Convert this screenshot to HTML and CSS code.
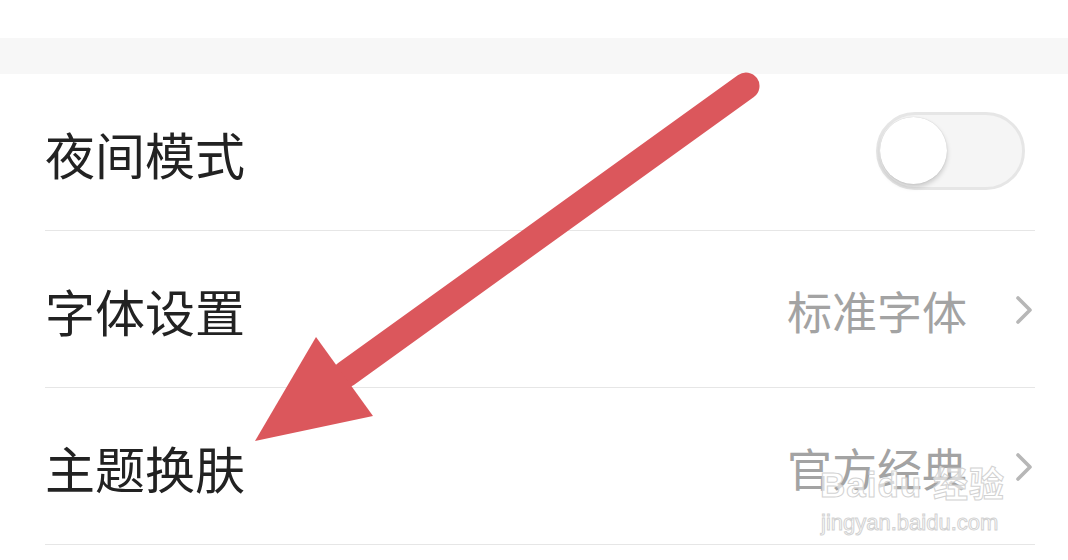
FILE: index.html
```html
<!DOCTYPE html>
<html lang="zh-CN">
<head>
  <meta charset="UTF-8">
  <title>设置</title>
  <link rel="stylesheet" href="styles.css">
</head>
<body>
  <div class="page">
    <div class="top-space"></div>
    <div class="band"></div>

    <!-- Settings list -->
    <div class="settings">
      <div class="row">
        <span class="label">夜间模式</span>
        <div class="switch"><div class="knob"></div></div>
      </div>
      <div class="row">
        <span class="label">字体设置</span>
        <div class="value">
          <span>标准字体</span>
          <svg class="chevron" width="20" height="30" viewBox="0 0 20 30"><path d="M4 3 L16 15 L4 27" fill="none" stroke="#b7b7b7" stroke-width="3.6" stroke-linecap="round" stroke-linejoin="round"/></svg>
        </div>
      </div>
      <div class="row">
        <span class="label">主题换肤</span>
        <div class="value">
          <span>官方经典</span>
          <svg class="chevron" width="20" height="30" viewBox="0 0 20 30"><path d="M4 3 L16 15 L4 27" fill="none" stroke="#b7b7b7" stroke-width="3.6" stroke-linecap="round" stroke-linejoin="round"/></svg>
        </div>
      </div>
    </div>

    <!-- Watermark -->
    <div class="watermark">
      <div class="wm-logo">Baidu 经验</div>
      <div class="wm-url">jingyan.baidu.com</div>
    </div>

    <!-- Annotation arrow -->
    <svg class="arrow" width="1068" height="560" viewBox="0 0 1068 560">
      <line x1="746" y1="86" x2="346" y2="374" stroke="#db575c" stroke-width="27" stroke-linecap="round"/>
      <polygon points="255,441 316,337 373,416" fill="#db575c"/>
    </svg>
  </div>
</body>
</html>
```

FILE: styles.css
```css
body {
  margin: 0;
  background-color: #ffffff;
  font-family: "Noto Sans CJK SC", "Noto Sans", sans-serif;
  color: #222222;
}

.page {
  position: relative;
  width: 1068px;
  height: 560px;
  overflow: hidden;
}

.top-space {
  height: 38px;
}

.band {
  height: 36px;
  background-color: #f7f7f7;
}

/* Settings rows */
.settings {
  padding: 0 33px 0 45px;
}

.row {
  display: flex;
  align-items: center;
  justify-content: space-between;
  height: 156px;
  border-bottom: 1px solid #e6e6e6;
}

.label {
  font-size: 50px;
  line-height: 1;
  padding-top: 2px;
}

.value {
  display: flex;
  align-items: center;
  gap: 47px;
  font-size: 45px;
  color: #a3a3a3;
  padding-top: 2px;
}

.value span {
  line-height: 1;
}

.chevron {
  margin-right: 1px;
}

/* Toggle switch */
.switch {
  width: 143px;
  height: 72px;
  margin-right: 10px;
  margin-top: -3px;
  border: 3px solid #e6e6e6;
  border-radius: 40px;
  background-color: #f5f5f5;
  display: flex;
  align-items: center;
}

.knob {
  width: 67px;
  height: 67px;
  margin-left: 1px;
  border-radius: 50%;
  background-color: #ffffff;
  box-shadow: 0 3px 5px rgba(0, 0, 0, 0.18), 0 0 1px rgba(0, 0, 0, 0.2);
}

/* Watermark */
.watermark {
  position: absolute;
  left: 820px;
  top: 466px;
  font-family: "Liberation Sans", "Noto Sans CJK SC", sans-serif;
  color: rgba(255, 255, 255, 0.6);
  -webkit-text-stroke: 1px #d2d2d2;
}

.wm-logo {
  font-size: 35px;
  font-weight: bold;
  line-height: 38px;
  letter-spacing: 1px;
}

.wm-url {
  font-size: 22px;
  line-height: 26px;
  margin-top: 6px;
  padding-left: 1px;
}

/* Arrow overlay */
.arrow {
  position: absolute;
  left: 0;
  top: 0;
}
```
